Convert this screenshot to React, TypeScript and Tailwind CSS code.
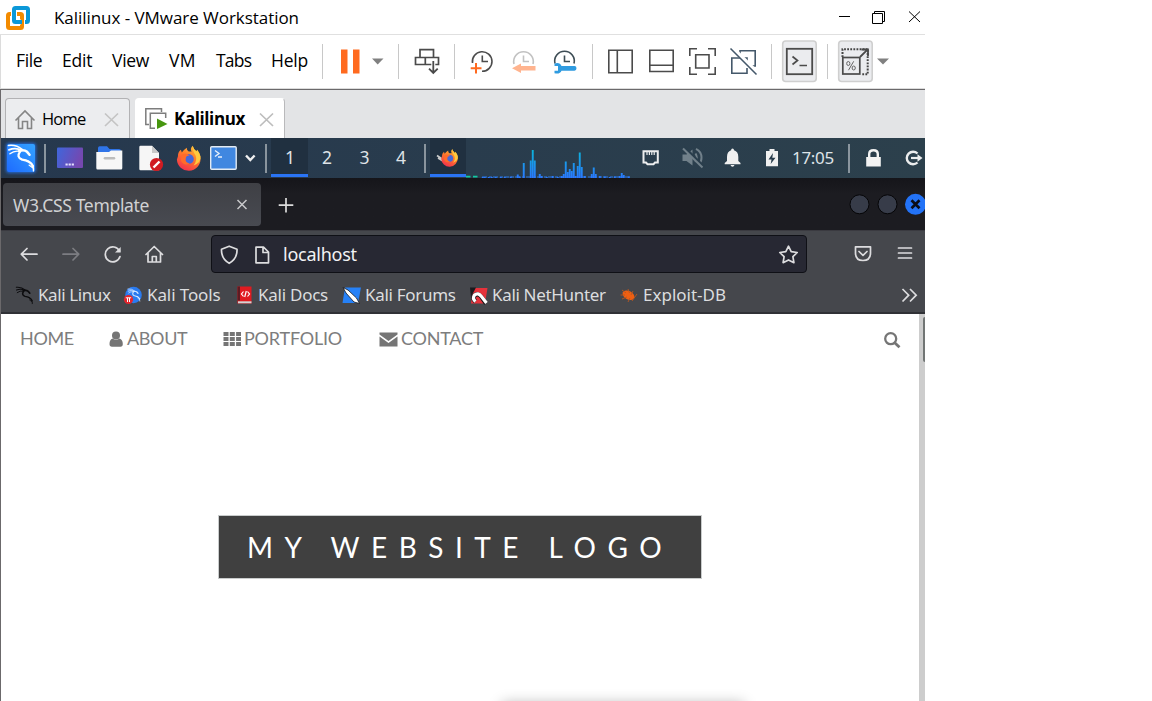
import type { ReactNode } from "react";

type Box = [x: number, y: number, w: number, h: number];

/** Inline drawing whose viewBox is given in window coordinates. */
function Glyph({ box, className = "", children }: { box: Box; className?: string; children: ReactNode }) {
  return (
    <svg
      width={box[2]}
      height={box[3]}
      viewBox={box.join(" ")}
      fill="none"
      className={`block shrink-0 ${className}`}
      aria-hidden="true"
    >
      {children}
    </svg>
  );
}

const ui = "font-['Open_Sans',sans-serif]";
const kali = "font-['Noto_Sans',sans-serif]";

function TitleBar() {
  return (
    <header className="flex h-[35px] items-center border-b border-[#e0e0e0] bg-white">
      <Glyph box={[0, 0, 54, 34]}>
        <rect x="14" y="8" width="14" height="14" rx="1.500" stroke="#0b98d8" strokeWidth="4" />
        <rect x="8" y="14" width="14" height="14" rx="1.500" stroke="#fff" strokeWidth="6" />
        <rect x="8" y="14" width="14" height="14" rx="1.500" stroke="#f38b00" strokeWidth="4" />
        <path d="M14 11V20.500Q14 22 15.500 22H20.500" stroke="#fff" strokeWidth="6" />
        <path d="M14 9.500V20.500Q14 22 15.500 22H22" stroke="#0b98d8" strokeWidth="4" />
      </Glyph>
      <h1 className={`${ui} w-[785px] shrink-0 whitespace-nowrap pt-[2px] text-[17px] leading-[34px] tracking-[-0.05px] text-black`}>
        Kalilinux - VMware Workstation
      </h1>
      <Glyph box={[839, 0, 86, 34]}>
        <path d="M839 16.5H850" stroke="#000" />
        <path d="M872.5 13.5H882.5V23.5H872.5ZM874.5 13V11.5H884.5V21.5H883" stroke="#000" />
        <path d="M909 11.5L920 22M920 11.5L909 22" stroke="#000" />
      </Glyph>
    </header>
  );
}

const menus: [string, string][] = [
  ["File", "w-[46px] tracking-[-0.4px]"],
  ["Edit", "w-[50px] tracking-[-0.2px]"],
  ["View", "w-[57px] tracking-[-0.3px]"],
  ["VM", "w-[47px] tracking-[0.4px]"],
  ["Tabs", "w-[55px] tracking-[-0.8px]"],
  ["Help", "w-[51px] tracking-[-0.2px]"],
];

const Sep = () => <span className="h-[35px] w-px shrink-0 bg-[#c8c8c8]" />;

function MenuBar() {
  return (
    <nav className="flex h-[54px] items-center border-b border-l border-[#dcdcdc] bg-white pl-[15px]">
      {menus.map(([name, cls]) => (
        <span key={name} className={`${ui} shrink-0 pb-[2px] text-[17.5px] leading-[51px] text-black ${cls}`}>
          {name}
        </span>
      ))}
      <Sep />
      <Glyph box={[323, 35, 75, 53]}>
        <path d="M341 49.5h6.5v24H341zM353 49.5h6.5v24H353z" fill="#ff6a1f" />
        <path d="M372 58.5H383.5L377.700 64.500Z" fill="#808080" />
      </Glyph>
      <Sep />
      <Glyph box={[399, 35, 55, 53]}>
        <path d="M420 57V49.700H433.500V57M415.500 57.500H438.500V64.500H415.500ZM425.300 57.500V64.500" stroke="#4a4a4a" strokeWidth="1.700" />
        <path d="M433.300 62V73M429.300 69L433.300 73L437.500 69" stroke="#fff" strokeWidth="4" />
        <path d="M433.300 61V73M429 68.700L433.300 73L437.700 68.700" stroke="#4a4a4a" strokeWidth="1.800" />
      </Glyph>
      <Sep />
      <Glyph box={[455, 35, 137, 53]}>
        <g strokeWidth="1.600">
          <path d="M472.500 63A9.800 9.800 0 1 1 482 71.300M482.300 55.500V61.500H488" stroke="#4c4c4c" />
          <path d="M476 63V73.500M470.700 68.300H481.500" stroke="#ff6a1f" strokeWidth="2" />
          <path d="M514 64A9.800 9.800 0 1 1 533 64M523.500 55.500V61.500H529" stroke="#c2c2c2" />
          <path d="M512 68.200L521 63.500V66H535.500V70.500H521V73Z" fill="#ffb48f" />
          <path d="M555 63.500A9.800 9.800 0 1 1 574 63.500M564.500 55.500V61.500H570" stroke="#3d4d55" />
          <path
            d="M554.500 63.500Q560 62 561.500 66H574.500Q576.500 66 576.500 68.300T574.500 70.700H561.500Q560 74.500 554.500 73.200V70.700H558V66H554.500Z"
            fill="#2f9be0"
          />
        </g>
      </Glyph>
      <Sep />
      <Glyph box={[593, 35, 178, 53]}>
        <g stroke="#4b4b4b" strokeWidth="1.600">
          <path d="M608.800 50.300H632.200V72.700H608.800ZM617.300 50V73" />
          <path d="M649.800 50.300H673.200V71.500H649.800ZM650 65.300H673" />
          <path d="M689.800 56V48.800H697M708 48.800H715.200V56M715.200 67V74.200H708M697 74.200H689.800V67M695.700 54.700H709V68H695.700Z" />
        </g>
        <g stroke="#44586a" strokeWidth="1.600">
          <path d="M740 56.500V50.800H755.200V66H749M744 58H731.800V73.200H747V68M741 58H747V64" />
          <path d="M731.500 47L757.500 73" stroke="#fff" strokeWidth="4" />
          <path d="M730.500 48.500L756.500 74.500" />
        </g>
      </Glyph>
      <Sep />
      <Glyph box={[772, 35, 55, 53]}>
        <rect x="782.700" y="41" width="33.500" height="40.500" rx="3" fill="#ebecef" stroke="#cfcfcf" strokeWidth="1.600" />
        <rect x="786.800" y="48.800" width="25.400" height="25.400" stroke="#4b4b4b" strokeWidth="1.800" />
        <path d="M792.500 56.500L797.500 60.500L792.500 64.500M799.500 65.500H807" stroke="#4b4b4b" strokeWidth="1.700" />
      </Glyph>
      <Sep />
      <Glyph box={[828, 35, 97, 53]}>
        <rect x="838.700" y="41" width="33.500" height="40.500" rx="3" fill="#ebecef" stroke="#cfcfcf" strokeWidth="1.600" />
        <path d="M842.500 57V49.300H868M867.700 50V74.300H861" stroke="#444" strokeWidth="2" strokeDasharray="1.800 1.300" />
        <rect x="842.800" y="57.500" width="17" height="16.500" stroke="#4b4b4b" strokeWidth="1.700" />
        <path d="M860 57L867.500 49.700M861.500 49.500H868V56" stroke="#4b4b4b" strokeWidth="1.800" />
        <ellipse cx="848.300" cy="63.500" rx="1.600" ry="2" stroke="#666" />
        <ellipse cx="853.700" cy="68" rx="1.600" ry="2" stroke="#666" />
        <path d="M853.700 61.300L848.500 70.200" stroke="#666" />
        <path d="M877 58.500H889L883 64.500Z" fill="#808080" />
      </Glyph>
    </nav>
  );
}

function VmTabs() {
  return (
    <div className="flex h-[49px] items-end border-l border-t border-[#6b696b] bg-[#e3e4e6]">
      <div className="ml-[4px] flex h-[40px] w-[125px] shrink-0 items-center rounded-t-[4px] border border-b-0 border-[#b2b2b4] bg-[#ecedef]">
        <Glyph box={[6, 99, 36, 38]}>
          <path d="M15.500 119.500L25 110L34.500 119.500M18.500 117V127.500H22.500V120.500H27.500V127.500H31.500V117" stroke="#858585" strokeWidth="1.600" />
        </Glyph>
        <span className={`${ui} w-[62px] shrink-0 text-[16.5px] leading-[38px] tracking-[-0.8px] text-black`}>Home</span>
        <Glyph box={[104, 99, 18, 38]}>
          <path d="M105 112.500L118 125M118 112.500L105 125" stroke="#c4c4c4" strokeWidth="1.700" />
        </Glyph>
      </div>
      <div className="ml-[5px] flex h-[40px] w-[150px] shrink-0 items-center rounded-t-[4px] border border-b-0 border-white border-r-[#b9b9bb] bg-white">
        <Glyph box={[136, 99, 38, 38]}>
          <path d="M149 123.500H145.800V107.800H161.500V111" stroke="#7d7d7d" strokeWidth="1.500" />
          <path d="M155 127.300H150.300V112.300H165.700V117" stroke="#7d7d7d" strokeWidth="1.500" />
          <path d="M157 117.500L167.500 123L157 128Z" fill="#46960f" />
        </Glyph>
        <span className={`${ui} w-[85px] shrink-0 text-[17px] leading-[38px] font-bold tracking-[-0.4px] text-black`}>Kalilinux</span>
        <Glyph box={[259, 99, 18, 38]}>
          <path d="M260 112.500L273 125M273 112.500L260 125" stroke="#bdbdbd" strokeWidth="1.700" />
        </Glyph>
      </div>
    </div>
  );
}

/** Dragon strokes on a 30x30 field. */
function Dragon({ color, at, scale }: { color: string; at: [number, number]; scale: number }) {
  return (
    <g transform={`translate(${at[0]} ${at[1]}) scale(${scale})`} stroke={color} strokeLinecap="round" strokeLinejoin="round">
      <path d="M2 2Q10 1 16 6" strokeWidth="1.600" />
      <path d="M2.500 6.500Q9 3.500 16 7" strokeWidth="1.800" />
      <path d="M3.500 10.500Q8 7 13 8" strokeWidth="1.500" />
      <path d="M13 7.500Q18 6 21 8.500L23.500 11.500" strokeWidth="2.600" />
      <path d="M14 8Q9.500 14 16 16.500Q24 17.500 27 23" strokeWidth="2.300" />
      <path d="M22 18Q28 21 27.500 28" strokeWidth="1.400" />
      <path d="M23 22L27 25" strokeWidth="1.200" />
    </g>
  );
}

function Fox({ cx, cy, r }: { cx: number; cy: number; r: number }) {
  return (
    <g transform={`translate(${cx} ${cy}) scale(${r / 12})`}>
      <path
        d="M-11-2Q-11-7-8-9L-7-6Q-5-9-2-11Q-2-8 0-7L3-7Q1-10 4-13Q5-9 8-7L8.500-9Q12-5 12 0A12 12 0 0 1-12 1Z"
        fill="url(#fox)"
      />
      <circle cx="0" cy="0.500" r="5.200" fill="#4668d8" />
      <path d="M-7-4Q-2-6 1-3Q-3-3-3 0Q-4 4 1 5Q-5 8-8 2Z" fill="#ff6b2a" />
      <path d="M4-13Q4-7 7-3Q9 2 5 7Q13 4 12-2Q11-6 8.500-9L8-7Q5-9 4-13" fill="#ffc93e" />
    </g>
  );
}

const bars: [number, number][] = [
  [482, 1], [484, 1], [488, 1], [491, 1], [495, 1], [500, 1], [504, 1], [510, 1.5], [517, 3.500], [519, 1.500],
  [523, 15], [530, 17.500], [532, 28], [534, 17.500], [539, 4], [541, 2], [546, 1], [552, 2], [557, 1], [561, 2],
  [563, 4], [565, 16.500], [567, 6], [569, 9], [571, 7], [573, 15], [575, 2], [577, 12], [579, 25.500], [581, 11],
  [584, 2], [591, 4], [593, 10.500], [595, 4], [599, 2], [604, 1.500], [609, 1], [614, 1.500], [619, 2], [621, 5], [623, 3], [628, 1.500],
];

const PanelSep = () => <span className="h-[29px] w-[2px] shrink-0 bg-[#8a959e]" />;

function KaliPanel() {
  return (
    <div className={`${kali} flex h-[40px] items-center bg-linear-to-r from-[#26384e] to-[#2c404c] text-[#dfe3e7]`}>
      <Glyph box={[1, 138, 43, 40]}>
        <defs>
          <linearGradient id="kali" x1="0" y1="1" x2="1" y2="0">
            <stop stopColor="#1e6bff" />
            <stop offset="1" stopColor="#33a2ff" />
          </linearGradient>
          <linearGradient id="desk" x1="0" y1="0" x2="1" y2="0.300">
            <stop stopColor="#3f66dc" />
            <stop offset="1" stopColor="#7548b0" />
          </linearGradient>
          <linearGradient id="fox" x1="0.800" y1="0" x2="0.300" y2="1">
            <stop stopColor="#ffc53a" />
            <stop offset="0.450" stopColor="#ff7a2a" />
            <stop offset="1" stopColor="#f2304e" />
          </linearGradient>
          <linearGradient id="load" gradientUnits="userSpaceOnUse" x1="0" y1="149" x2="0" y2="178">
            <stop stopColor="#0ab7d8" />
            <stop offset="1" stopColor="#2a78ff" />
          </linearGradient>
          <filter id="glow" x="-40%" y="-40%" width="180%" height="180%">
            <feGaussianBlur stdDeviation="1.800" />
          </filter>
        </defs>
        <rect x="6" y="143" width="30" height="30" rx="3" fill="#2277f5" opacity="0.800" filter="url(#glow)" />
        <rect x="7" y="144" width="28" height="28" rx="2" fill="url(#kali)" />
        <Dragon color="#fff" at={[6.500, 143.500]} scale={0.98} />
      </Glyph>
      <PanelSep />
      <Glyph box={[46, 138, 219, 40]}>
        <rect x="57" y="147.500" width="26" height="20.500" rx="1" fill="url(#desk)" />
        <path d="M65.500 164.500H74" stroke="#e6e2ff" strokeWidth="2" strokeDasharray="2.200 0.900" />
        <path d="M98 154V148Q98 146.300 99.700 146.300H107L109.500 149H119Q121 149 121 151V154Z" fill="#2f74e8" />
        <path d="M96.300 152H109L111 150.500H122.300V168Q122.300 169.500 121 169.500H97.500Q96.300 169.500 96.300 168Z" fill="#f7f7f7" />
        <path d="M105 158.200H114" stroke="#bcbcbc" strokeWidth="2.600" strokeLinecap="round" />
        <path d="M139.300 147Q139.300 145.700 140.500 145.700H152L159 153V170.300H140.500Q139.300 170.300 139.300 169Z" fill="#f6f6f6" />
        <path d="M152 145.700V153H159Z" fill="#c9c9c9" />
        <circle cx="156.500" cy="164.500" r="6.600" fill="#d01c22" />
        <path d="M153.500 167.500L159.500 161.500" stroke="#fff" strokeWidth="2.400" />
        <Fox cx={188.700} cy={158.500} r={11.800} />
        <rect x="210.700" y="146.700" width="25.500" height="22.500" rx="1" fill="#4087e0" stroke="#e3ebf3" strokeWidth="1.400" />
        <path d="M215 150.500L219 153.500L215 156.500M218 157H222" stroke="#e8f0fa" strokeWidth="1.400" />
        <path d="M246 155.500L250.300 160L254.600 155.500" stroke="#f0f0f0" strokeWidth="2.400" />
      </Glyph>
      <PanelSep />
      <ol className="ml-[4px] flex h-[40px] text-[17.5px] leading-[38px]">
        <li className="h-[39px] w-[37px] border-b-[3px] border-[#2a74f5] bg-[#203040] pl-px text-center">1</li>
        <li className="w-[38px] text-center">2</li>
        <li className="w-[37px] text-center">3</li>
        <li className="w-[36px] text-center">4</li>
      </ol>
      <span className="ml-[5px] flex"><PanelSep /></span>
      <div className="ml-[4px] h-[39px] w-[36px] shrink-0 self-start border-b-[3px] border-[#2a74f5] bg-[#203040]">
        <Glyph box={[430, 138, 36, 36]}>
          <path d="M437 155.500L445 161M438 158L443 161" stroke="#c9c9c9" strokeWidth="1.700" />
          <Fox cx={449.500} cy={158} r={8.300} />
        </Glyph>
      </div>
      <Glyph box={[466, 138, 326, 40]}>
        <path d="M466 176.700H470.500M473 176.700H477.500" stroke="#12c8a0" strokeWidth="1.800" />
        <path d="M482 177H630" stroke="#2a78e6" strokeWidth="1" strokeDasharray="5 2 3 1" />
        {bars.map(([x, h]) => (
          <rect key={x} x={x - 0.2} y={178 - h} width="1.900" height={h} fill="url(#load)" />
        ))}
        <path d="M643.500 151.200H657.800V162.500H655L653.500 164.200H647.500L646 162.500H643.500Z" stroke="#ecedee" strokeWidth="2" />
        <path d="M647 152V155M649.400 152V155M651.800 152V155M654.200 152V155" stroke="#ecedee" strokeWidth="1.200" />
        <g stroke="#71808a">
          <path d="M682.500 154.500H686.500L692.500 149.500V165.500L686.500 161H682.500Z" fill="#71808a" stroke="none" />
          <path d="M695.500 153.500Q698 157.500 695.500 162M696 148.800Q701.500 151.500 701.500 157.500Q701.500 162 699 164" strokeWidth="2" />
          <path d="M684 147L704 167" stroke="#293d4c" strokeWidth="3" />
          <path d="M683 148.500L702.500 167.500" strokeWidth="2" />
        </g>
        <path d="M732.500 148.500Q734 148.500 734 150.200Q738.300 151.500 738.300 157V161L740.500 163V164.200H724.700V163L727 161V157Q727 151.500 731.100 150.200Q731.100 148.500 732.500 148.500ZM730.500 165H734.500Q734 166.700 732.500 166.700T730.500 165Z" fill="#f0f0f0" />
        <path d="M769.500 149H774.500V151H778V166.200H766V151H769.500Z" fill="#f0f0f0" />
        <path d="M773 153L768.500 159.500H771.500L770.700 164L775.500 157.800H772.300Z" fill="#293d4c" />
      </Glyph>
      <time className="w-[56px] shrink-0 text-[17px] leading-[38px] tracking-[-0.3px]">17:05</time>
      <PanelSep />
      <Glyph box={[850, 138, 75, 40]}>
        <path d="M866.200 157H880.800V166.500H866.200Z" fill="#f3f3f3" />
        <path d="M869.200 158V154Q869.200 150.300 873.500 150.300T877.800 154V158" stroke="#f3f3f3" strokeWidth="2.400" />
        <path d="M917.500 153.500A6.300 6.300 0 1 0 917.500 162.500" stroke="#ecedee" strokeWidth="2.400" />
        <path d="M911 158H918" stroke="#ecedee" strokeWidth="2.200" />
        <path d="M917.500 154.300L922.500 158L917.500 161.700Z" fill="#ecedee" />
      </Glyph>
    </div>
  );
}

function BrowserTabs() {
  return (
    <div className="flex h-[52px] items-center bg-linear-to-b from-[#15151a] to-[#1c1c21] to-30%">
      <div className={`${kali} ml-[2px] flex h-[43px] w-[258px] shrink-0 items-center rounded-[4px] bg-linear-to-b from-[#3f4045] to-[#484a51] pl-[10px]`}>
        <span className="w-[223px] shrink-0 whitespace-nowrap pt-px text-[17.500px] leading-[42px] tracking-[-0.320px] text-[#d0d1d3]">W3.CSS Template</span>
        <Glyph box={[236, 183, 14, 42]}>
          <path d="M237.500 200L246.500 209M246.500 200L237.500 209" stroke="#c9c9cb" strokeWidth="1.500" />
        </Glyph>
      </div>
      <Glyph box={[261, 178, 664, 52]}>
        <path d="M286 198V212.500M278.700 205.200H293.300" stroke="#dcdcdc" strokeWidth="1.700" />
        <circle cx="859.500" cy="204.300" r="9.500" fill="#373c49" stroke="#050507" />
        <circle cx="887.500" cy="204.300" r="9.500" fill="#373c49" stroke="#050507" />
        <circle cx="915.500" cy="204.300" r="10.500" fill="#2373f7" />
        <path d="M911.500 200.300L919.500 208.300M919.500 200.300L911.500 208.300" stroke="#0a0d18" strokeWidth="2.700" />
      </Glyph>
    </div>
  );
}

function AddressRow() {
  return (
    <div className="flex h-[46px] items-center border-t border-[#3a3a40]">
      <Glyph box={[1, 231, 210, 45]}>
        <g stroke="#dddddf" strokeWidth="1.700" strokeLinecap="round" strokeLinejoin="round">
          <path d="M37 254.200H21.500M27 248.500L21.300 254.200L27 260" />
          <path d="M63 254.200H78.500M73 248.500L78.700 254.200L73 260" stroke="#7c7d82" />
          <path d="M119.500 251A7.500 7.500 0 1 0 120 256.500" />
          <path d="M120.700 247V252.500H115Z" fill="#dddddf" stroke="none" />
          <path d="M146 254.500L154.200 246.500L162.500 254.500M148 253V262H160.500V253M152.300 262V256.500H156.300V262" />
        </g>
      </Glyph>
      <div className="flex h-[38px] w-[596px] shrink-0 items-center rounded-[4px] border border-[#0f1016] bg-[#272833]">
        <Glyph box={[212, 235, 71, 36]}>
          <g stroke="#dddddf" strokeWidth="1.700" strokeLinejoin="round">
            <path d="M229.200 245.200L237 248.200Q237.500 257.500 229.200 262.300Q221 257.500 221.500 248.200Z" />
            <path d="M256 246.200H263.500L268.500 251V261.800H256ZM263 246.500V251.500H268.500" />
          </g>
        </Glyph>
        <span className={`${kali} w-[493px] shrink-0 text-[18px] leading-[36px] tracking-[-0.250px] text-[#f2f2f4]`}>localhost</span>
        <Glyph box={[776, 235, 28, 36]}>
          <path
            d="M788.500 245.200L791.200 250.600L797.200 251.500L792.900 255.700L793.900 261.700L788.500 258.900L783.100 261.700L784.100 255.700L779.800 251.500L785.800 250.600Z"
            stroke="#dddddf"
            strokeWidth="1.700"
            strokeLinejoin="round"
          />
        </Glyph>
      </div>
      <Glyph box={[807, 231, 118, 45]}>
        <g stroke="#dddddf" strokeWidth="1.700" strokeLinecap="round" strokeLinejoin="round">
          <path d="M855.500 246.800H870.500V253Q870.500 260.500 863 260.500T855.500 253ZM859 251.500L863 255.300L867 251.500" />
          <path d="M898.500 248H911.500M898.500 253H911.500M898.500 258H911.500" />
        </g>
      </Glyph>
    </div>
  );
}

function BookmarksRow() {
  const label = `${kali} shrink-0 whitespace-nowrap pt-[2px] text-[17px] leading-[34px] text-[#dcdddf]`;
  return (
    <div className="flex h-[36px] items-center">
      <Glyph box={[1, 277, 37, 35]}>
        <Dragon color="#0c0c0e" at={[15, 286]} scale={0.63} />
      </Glyph>
      <span className={`${label} w-[85px] tracking-[-0.4px]`}>Kali Linux</span>
      <Glyph box={[123, 277, 24, 35]}>
        <circle cx="133.500" cy="295" r="8.300" fill="#2a7bf0" />
        <Dragon color="#d7e8ff" at={[127, 288]} scale={0.47} />
        <circle cx="128.500" cy="299.500" r="4.600" fill="#e5252c" />
        <path d="M125.800 297.800H131.200M127.500 298V302M129.500 298V302" stroke="#fff" />
      </Glyph>
      <span className={`${label} w-[89px] tracking-[-0.1px]`}>Kali Tools</span>
      <Glyph box={[236, 277, 22, 35]}>
        <rect x="237.500" y="286.500" width="14" height="17" fill="#e01b20" />
        <rect x="237.500" y="286.500" width="2.500" height="14" fill="#5d1b22" />
        <path d="M238 302.300H251.500" stroke="#d3d3d3" strokeWidth="2" />
        <path d="M243.500 291.500L241.500 294L243.500 296.500M247.500 291.500L249.500 294L247.500 296.500M246.300 291L244.700 297" stroke="#fff" strokeWidth="1.200" />
      </Glyph>
      <span className={`${label} w-[82px] tracking-[-0.250px]`}>Kali Docs</span>
      <Glyph box={[340, 277, 25, 35]}>
        <path d="M345 287.500H361L358 303H342.500Z" fill="#2681f7" />
        <path d="M343 287.500L346 293L354 302L359.500 303.500L356.500 298L348 290Z" fill="#fff" stroke="#15161a" strokeWidth="0.800" />
      </Glyph>
      <span className={`${label} w-[103px] tracking-[-0.3px]`}>Kali Forums</span>
      <Glyph box={[468, 277, 24, 35]}>
        <path d="M473 288H487.500L485 303.500H471Z" fill="#e5323b" />
        <path d="M470 287.500H476L471 297Z" fill="#1b1b1e" />
        <path d="M486 303.500L481.500 297Q478 292.500 474.500 295.500Q472 298.500 475.500 301.500" stroke="#17171a" strokeWidth="4.400" />
        <path d="M486.500 303L481.500 296.500Q478 292 474.500 295Q472 298.500 475.500 301.500" stroke="#fff" strokeWidth="3.200" />
      </Glyph>
      <span className={`${label} w-[127px] tracking-[-0.330px]`}>Kali NetHunter</span>
      <Glyph box={[619, 277, 24, 35]}>
        <ellipse cx="628.500" cy="295.300" rx="6.300" ry="4.200" transform="rotate(28 628.500 295.300)" fill="#ee5f12" />
        <path d="M622 290L626 293M628 289L629.500 293M633 291L631 295M622 299L627 297M628 302L630 298M632 301L637 294M620.500 295H625" stroke="#b9561f" strokeWidth="0.900" />
      </Glyph>
      <span className={`${label} w-[258px] tracking-[0px]`}>Exploit-DB</span>
      <Glyph box={[901, 277, 24, 35]}>
        <path d="M902.500 289L908.700 295.200L902.500 301.500M910 289L916.200 295.200L910 301.500" stroke="#dcdcde" strokeWidth="1.700" />
      </Glyph>
    </div>
  );
}

function SiteNav() {
  const item = "shrink-0 whitespace-nowrap pb-px text-[18px] leading-[49px]";
  return (
    <nav className="flex h-[50px] items-center pl-[19px] font-['Lato',sans-serif] text-[#7d7d7d]">
      <span className={`${item} w-[88px] tracking-[-0.350px]`}>HOME</span>
      <Glyph box={[108, 314, 19, 50]}>
        <circle cx="116" cy="335.500" r="4" fill="#757575" />
        <path d="M112.500 338.500Q116 341 119.500 338.500Q122.800 339.500 122.800 344Q122.800 346.700 120.500 346.700H112Q109.500 346.700 109.500 344Q109.500 339.500 112.500 338.500Z" fill="#757575" />
      </Glyph>
      <span className={`${item} w-[96px] tracking-[-0.350px]`}>ABOUT</span>
      <Glyph box={[223, 314, 21, 50]}>
        <path d="M223.500 334H241M223.500 339H241M223.500 344H241" stroke="#757575" strokeWidth="3.800" strokeDasharray="5 1.300" />
      </Glyph>
      <span className={`${item} w-[135px] tracking-[-0.2px]`}>PORTFOLIO</span>
      <Glyph box={[379, 314, 22, 50]}>
        <path d="M379.500 332.500H397.500V334.500L388.500 341L379.500 334.500ZM379.500 336.500L388.500 343L397.500 336.500V346.500H379.500Z" fill="#757575" />
      </Glyph>
      <span className={`${item} w-[482px] tracking-[-0.250px]`}>CONTACT</span>
      <Glyph box={[883, 314, 20, 50]}>
        <circle cx="890.700" cy="338.700" r="5.500" stroke="#757575" strokeWidth="2.300" />
        <path d="M894.700 342.700L899.500 347.300" stroke="#757575" strokeWidth="2.800" />
      </Glyph>
    </nav>
  );
}

function WebPage() {
  return (
    <div className="flex h-[387px]">
      <main className="relative flex w-[918px] shrink-0 flex-col items-center overflow-hidden bg-white">
        <div className="self-stretch"><SiteNav /></div>
        <div className="mt-[151px] h-[64px] w-[484px] border border-[#c9cccc] bg-[#404040] pl-[28px]">
          <p className="whitespace-nowrap font-['Lato',sans-serif] text-[28px] leading-[62px] tracking-[11.480px] text-white">MY WEBSITE LOGO</p>
        </div>
        <div className="absolute left-[503px] top-[391px] h-[20px] w-[238px] shadow-[0_0_14px_2px_rgba(0,0,0,0.28)]" />
      </main>
      <div className="flex w-[6px] shrink-0 justify-end bg-[#cdcdcd]">
        <div className="mt-[3px] h-[45px] w-[2.500px] rounded-l-[3px] bg-[#717574]" />
      </div>
    </div>
  );
}

export default function App() {
  return (
    <div className="h-[701px] w-full overflow-hidden bg-white">
      <div className="w-[925px]">
        <TitleBar />
        <MenuBar />
        <VmTabs />
        <div className="w-[925px] overflow-hidden border-l border-[#6b696b]">
          <KaliPanel />
          <BrowserTabs />
          <div className="h-[84px] border-b-2 border-[#303136] bg-[#45474c]">
            <AddressRow />
            <BookmarksRow />
          </div>
          <WebPage />
        </div>
      </div>
    </div>
  );
}
